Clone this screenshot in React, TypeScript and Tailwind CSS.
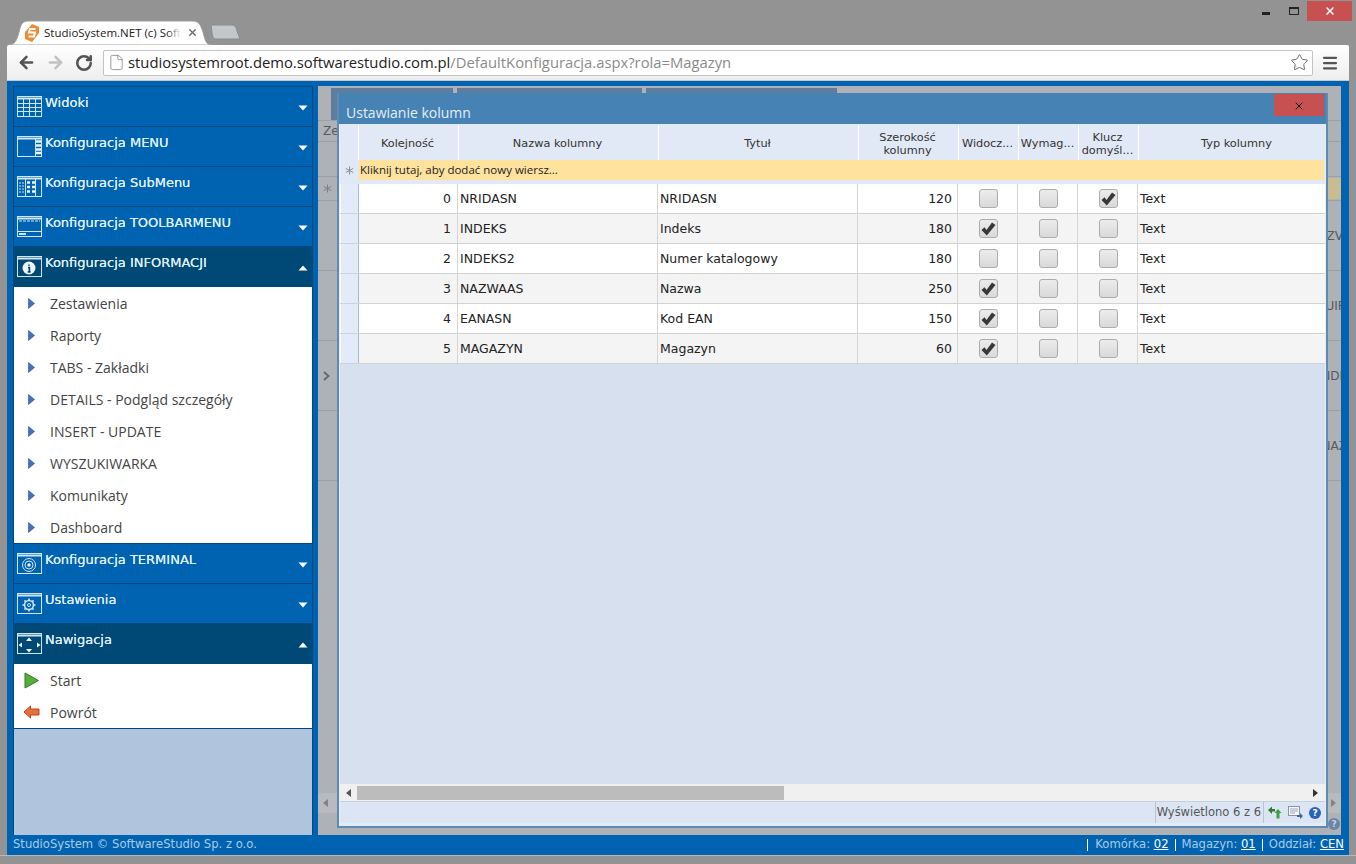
import { ArrowLeft, ArrowRight, File, Menu, RotateCw, Star, X } from 'lucide-react'

const columns = [
  { title: 'Kolejność', width: 'w-[100px]' },
  { title: 'Nazwa kolumny', width: 'w-[200px]' },
  { title: 'Tytuł', width: 'w-[200px]' },
  { title: 'Szerokość kolumny', width: 'w-[100px]' },
  { title: 'Widocz...', width: 'w-[60px]' },
  { title: 'Wymag...', width: 'w-[60px]' },
  { title: 'Klucz domyśl...', width: 'w-[60px]' },
  { title: 'Typ kolumny', width: 'w-[198px]' },
]

const rows = [
  { order: 0, name: 'NRIDASN', title: 'NRIDASN', width: 120, visible: false, required: false, key: true },
  { order: 1, name: 'INDEKS', title: 'Indeks', width: 180, visible: true, required: false, key: false },
  { order: 2, name: 'INDEKS2', title: 'Numer katalogowy', width: 180, visible: false, required: false, key: false },
  { order: 3, name: 'NAZWAAS', title: 'Nazwa', width: 250, visible: true, required: false, key: false },
  { order: 4, name: 'EANASN', title: 'Kod EAN', width: 150, visible: true, required: false, key: false },
  { order: 5, name: 'MAGAZYN', title: 'Magazyn', width: 60, visible: true, required: false, key: false },
]

const backgroundRows = [
  { label: 'NAZV', offset: 'mr-[-2px]' },
  { label: 'NUIP', offset: 'mr-[-4px]' },
  { label: 'INDE', offset: 'mr-[-6px]' },
  { label: 'NAZ', offset: 'mr-[-6px]' },
]

function WindowIcon({ kind }: { kind: string }) {
  return (
    <svg width="25" height="21" viewBox="0 0 25 21" className="shrink-0" fill="none" stroke="#cfe6f7" strokeWidth="1">
      <rect x="0.5" y="0.5" width="24" height="20" />
      <path d="M0.5 2.5H24.5" strokeWidth="2" />
      {kind === 'grid' && (
        <path d="M0.5 7.5H24.5M0.5 11.5H24.5M0.5 15.5H24.5M6.5 3V20M12.5 3V20M18.5 3V20" />
      )}
      {kind === 'menu' && (
        <g>
          <path d="M18.5 3V20" />
          <path d="M19 5.5H24M19 9.5H24M19 13.5H24M19 17H24" strokeWidth="2.4" stroke="#eaf4fb" />
        </g>
      )}
      {kind === 'submenu' && (
        <g>
          <path d="M8.5 3V20M18.5 3V20" />
          <path d="M2 7H7M2 10H7M2 13H7M2 16H7" strokeDasharray="2 1" />
          <path d="M10 6.5H13M15 6.5H18M10 11H13M15 11H18M10 15.5H13M15 15.5H18" strokeWidth="2.6" stroke="#eaf4fb" />
        </g>
      )}
      {kind === 'toolbar' && (
        <g>
          <path d="M0.5 15.5H24.5" />
          <path d="M2 18H9" strokeWidth="2" />
          <path d="M2 5H23" strokeDasharray="3 1" />
        </g>
      )}
      {kind === 'info' && (
        <g>
          <circle cx="12" cy="12" r="6.5" fill="#eef6fc" stroke="none" />
          <path d="M12 8.5V9.8M11 11.5H12.4V15.5M10.8 15.8H13.6" stroke="#00467a" strokeWidth="1.7" />
        </g>
      )}
      {kind === 'terminal' && (
        <g>
          <circle cx="12" cy="12" r="6.5" />
          <circle cx="12" cy="12" r="4" />
          <circle cx="12" cy="12" r="1.7" fill="#eef6fc" stroke="none" />
        </g>
      )}
      {kind === 'settings' && (
        <g>
          <circle cx="12" cy="12" r="4.5" strokeWidth="1.6" />
          <circle cx="12" cy="12" r="1.5" />
          <path d="M12 5.5V7.5M12 16.5V18.5M5.5 12H7.5M16.5 12H18.5M7.4 7.4L8.8 8.8M15.2 15.2L16.6 16.6M16.6 7.4L15.2 8.8M8.8 15.2L7.4 16.6" strokeWidth="1.6" />
        </g>
      )}
      {kind === 'nav' && (
        <g fill="#eef6fc" stroke="none">
          <path d="M12 4.5L15 8H9Z" />
          <path d="M12 19.5L15 16H9Z" />
          <path d="M1.5 12L5 9.5V14.5Z" />
          <path d="M23.5 12L20 9.5V14.5Z" />
        </g>
      )}
    </svg>
  )
}

function Caret({ up }: { up: boolean }) {
  return (
    <svg width="10" height="6" viewBox="0 0 10 6" className="shrink-0">
      <path d={up ? 'M5 0.5L9.5 5.5H0.5Z' : 'M0.5 0.5H9.5L5 5.5Z'} fill="#ffffff" />
    </svg>
  )
}

function MenuHeader({ label, icon, open }: { label: string; icon: string; open?: boolean }) {
  return (
    <div
      className={`h-10 shrink-0 flex items-center pl-[3px] pr-1 border-b border-[#00487d] ${
        open ? 'bg-[#004875]' : 'bg-[#0063b1]'
      }`}
    >
      <WindowIcon kind={icon} />
      <span className="ml-[3px] mb-2 flex-1 font-['DejaVu_Sans',sans-serif] text-[13px] text-[#dceefa] [text-shadow:0_0_0.5px_#ffffff]">
        {label}
      </span>
      <div className="mt-[3px] flex">
        <Caret up={!!open} />
      </div>
    </div>
  )
}

function SubItem({ label, icon }: { label: string; icon?: string }) {
  return (
    <div className="h-8 flex items-center">
      <div className="w-[27px] flex justify-end shrink-0">
        {icon === 'start' ? (
          <svg width="15" height="17" viewBox="0 0 15 17" className="mr-[2px]">
            <path d="M1 1L14.5 8.5L1 16Z" fill="#58ae3a" stroke="#2f7a22" strokeLinejoin="round" />
          </svg>
        ) : icon === 'back' ? (
          <svg width="17" height="14" viewBox="0 0 17 14" className="mr-[1px]">
            <path d="M1 7L7.5 1V4H16V10H7.5V13Z" fill="#e8703a" stroke="#b8471e" strokeLinejoin="round" />
          </svg>
        ) : (
          <svg width="7" height="11" viewBox="0 0 7 11" className="mr-[6px]">
            <path d="M0.5 0.5L6.5 5.5L0.5 10.5Z" fill="#3f72c4" stroke="#2a4f96" strokeWidth="0.6" />
          </svg>
        )}
      </div>
      <span className="ml-[9px] font-['Open_Sans',sans-serif] text-[14px] text-[#444444]">{label}</span>
    </div>
  )
}

function Sidebar() {
  return (
    <aside className="w-[300px] shrink-0 flex flex-col bg-[#b0c4de] border border-[#00487d] border-b-0">
      <MenuHeader label="Widoki" icon="grid" />
      <MenuHeader label="Konfiguracja MENU" icon="menu" />
      <MenuHeader label="Konfiguracja SubMenu" icon="submenu" />
      <MenuHeader label="Konfiguracja TOOLBARMENU" icon="toolbar" />
      <MenuHeader label="Konfiguracja INFORMACJI" icon="info" open />
      <div className="bg-white border-b border-[#00487d]">
        <SubItem label="Zestawienia" />
        <SubItem label="Raporty" />
        <SubItem label="TABS - Zakładki" />
        <SubItem label="DETAILS - Podgląd szczegóły" />
        <SubItem label="INSERT - UPDATE" />
        <SubItem label="WYSZUKIWARKA" />
        <SubItem label="Komunikaty" />
        <SubItem label="Dashboard" />
      </div>
      <MenuHeader label="Konfiguracja TERMINAL" icon="terminal" />
      <MenuHeader label="Ustawienia" icon="settings" />
      <MenuHeader label="Nawigacja" icon="nav" open />
      <div className="bg-white border-b border-[#00487d]">
        <SubItem label="Start" icon="start" />
        <SubItem label="Powrót" icon="back" />
      </div>
    </aside>
  )
}

function Checkbox({ checked }: { checked: boolean }) {
  return (
    <div className="ml-[1px] w-[19px] h-[19px] rounded-[3px] border border-[#acacac] bg-gradient-to-b from-[#ececec] to-[#d9d9d9] flex items-center justify-center">
      {checked && (
        <svg width="15" height="14" viewBox="0 0 15 14">
          <path d="M0.5 8L3.5 5.2L5.5 8L11 0.5L14.5 3L5.8 13.5Z" fill="#383838" />
        </svg>
      )}
    </div>
  )
}

function Asterisk({ color }: { color: string }) {
  return (
    <svg width="9" height="9" viewBox="0 0 9 9" fill="none" stroke={color}>
      <path d="M4.5 0.5V8.5M0.8 2.5L8.2 6.5M8.2 2.5L0.8 6.5" />
    </svg>
  )
}

function GridRow({ row, index }: { row: (typeof rows)[number]; index: number }) {
  const cell = 'h-full flex items-center border-r border-[#d6d6d6] shrink-0'
  const text = 'pt-[2px]'
  return (
    <div
      className={`h-[30px] flex items-stretch border-b border-[#d2d2d2] font-['DejaVu_Sans',sans-serif] text-[12.5px] text-[#222222] ${
        index % 2 ? 'bg-[#f4f4f4]' : 'bg-white'
      }`}
    >
      <div className="w-[19px] shrink-0 bg-[#e2ebf7] border-r border-[#a9b9cd] border-l border-l-white" />
      <div className={`${cell} ${text} w-[99px] justify-end pr-[6px]`}>{row.order}</div>
      <div className={`${cell} ${text} w-[200px] pl-[2px]`}>{row.name}</div>
      <div className={`${cell} ${text} w-[200px] pl-[2px]`}>{row.title}</div>
      <div className={`${cell} ${text} w-[100px] justify-end pr-[5px]`}>{row.width}</div>
      <div className={`${cell} w-[60px] justify-center`}>
        <Checkbox checked={row.visible} />
      </div>
      <div className={`${cell} w-[60px] justify-center`}>
        <Checkbox checked={row.required} />
      </div>
      <div className={`${cell} w-[60px] justify-center`}>
        <Checkbox checked={row.key} />
      </div>
      <div className={`${text} flex-1 flex items-center pl-[2px]`}>Text</div>
    </div>
  )
}

function ColumnsDialog() {
  return (
    <div className="absolute left-[19px] top-[7px] w-[991px] h-[735px] bg-[#4682b4] flex flex-col border-2 border-t-0 border-[#5f8ab3]">
      <div className="h-[31px] shrink-0 flex items-start justify-between">
        <span className="ml-[7px] mt-[10px] font-['Open_Sans',sans-serif] text-[14px] leading-[20px] text-[#e4eef6]">
          Ustawianie kolumn
        </span>
        <div className="w-[50px] h-[22px] mt-[1px] mr-[2px] bg-[#c75050] flex items-center justify-center">
          <X size={12} strokeWidth={2} className="mt-[2px] text-[#111111]" />
        </div>
      </div>
      <div className="flex-1 flex flex-col min-h-0 bg-[#d6e0ef] border-t border-[#dfe8f4] border-x border-x-[#e6eef8] border-b-[3px] border-b-[#e2ebf7]">
        <div className="h-[35px] shrink-0 flex overflow-hidden bg-[#e2e9f6] font-['DejaVu_Sans',sans-serif] text-[11.3px] leading-[13px] text-[#333333]">
          <div className="w-[19px] shrink-0 border-r border-white" />
          {columns.map((col) => (
            <div
              key={col.title}
              className={`${col.width} shrink-0 flex items-center justify-center text-center pt-[2px] pr-[2px] border-r border-white`}
            >
              {col.title}
            </div>
          ))}
        </div>
        <div className="h-5 shrink-0 flex items-center bg-[#e2e9f6]">
          <div className="w-[19px] shrink-0 flex justify-center">
            <Asterisk color="#8a8f96" />
          </div>
          <div className="flex-1 h-full flex items-center pl-[1px] bg-[#ffe29e] text-[#222222] font-['Open_Sans',sans-serif] text-[11.5px] mr-[1px]">
            Kliknij tutaj, aby dodać nowy wiersz...
          </div>
        </div>
        <div className="h-1 shrink-0 bg-[#e2e9f6]" />
        {rows.map((row, index) => (
          <GridRow key={row.order} row={row} index={index} />
        ))}
        <div className="flex-1" />
        <div className="h-[17px] shrink-0 flex items-center bg-[#f0f0f0]">
          <div className="w-[17px] flex justify-center shrink-0">
            <svg width="5" height="8" viewBox="0 0 5 8">
              <path d="M5 0V8L0 4Z" fill="#555555" />
            </svg>
          </div>
          <div className="w-[427px] h-[14px] bg-[#bcbcbc]" />
          <div className="flex-1 flex justify-end pr-[7px]">
            <svg width="5" height="8" viewBox="0 0 5 8">
              <path d="M0 0V8L5 4Z" fill="#333333" />
            </svg>
          </div>
        </div>
        <div className="h-[22px] shrink-0 flex items-center justify-end border-t border-[#c6d0dc] bg-[#dbe5f3] pr-[4px]">
          <div className="h-full flex items-center border-l border-[#b9c4d2] px-[1px] font-['DejaVu_Sans',sans-serif] text-[11.5px] text-[#555555]">
            Wyświetlono 6 z 6
          </div>
          <div className="h-full flex items-center gap-[6px] border-l border-[#b9c4d2] pl-[4px] ml-[1px]">
            <svg width="14" height="13" viewBox="0 0 14 13">
              <path d="M0 4L4 0.5V3H7V5.5H4V8Z" fill="#2e7d2e" />
              <path d="M10 3L13.5 7H11.5V12.5H8.5V7H6.5Z" fill="#3aa23a" />
            </svg>
            <svg width="15" height="13" viewBox="0 0 15 13">
              <rect x="0.5" y="0.5" width="11" height="9" fill="#f4f7fb" stroke="#8794a6" />
              <path d="M2 3H10M2 5H10M2 7H7" stroke="#9aa6b6" />
              <path d="M9 9H12V7L15 10L12 13V11H9Z" fill="#3c68a8" />
            </svg>
            <div className="w-3 h-3 rounded-full bg-[#2a62b8] text-white text-[9px] leading-3 text-center font-bold font-['DejaVu_Sans',sans-serif]">
              ?
            </div>
          </div>
        </div>
      </div>
    </div>
  )
}

function BackgroundGrid() {
  return (
    <div className="relative flex-1 min-w-0 flex flex-col bg-[#aeb1b6] font-['DejaVu_Sans',sans-serif] text-[12px] text-[#555a60] overflow-hidden">
      <div className="h-[34px] shrink-0 pl-[13px] pt-[2px] flex gap-1">
        <div className="w-[122px] bg-[#5f7d9e]" />
        <div className="w-[185px] bg-[#5f7d9e]" />
        <div className="w-[191px] bg-[#5f7d9e]" />
      </div>
      <div className="h-[22px] shrink-0 flex items-center border-y border-[#9c9fa4] pl-[5px]">Ze</div>
      <div className="h-[35px] shrink-0 border-b border-[#9c9fa4]" />
      <div className="h-[24px] shrink-0 flex items-center justify-between pl-[5px] border-b border-[#9c9fa4]">
        <Asterisk color="#7c8086" />
        <div className="w-[30px] h-[21px] bg-[#c9bc92]" />
      </div>
      {backgroundRows.map((row) => (
        <div key={row.label} className="h-[70px] shrink-0 flex items-center justify-between border-b border-[#9c9fa4]">
          {row.label === 'INDE' ? (
            <svg width="7" height="10" viewBox="0 0 7 10" fill="none" stroke="#666a70" strokeWidth="2" className="ml-[5px]">
              <path d="M1 1L5.5 5L1 9" />
            </svg>
          ) : (
            <span />
          )}
          <span className={`${row.offset} whitespace-nowrap`}>{row.label}</span>
        </div>
      ))}
      <div className="flex-1" />
      <div className="h-[20px] shrink-0 flex items-center justify-between bg-[#b8babd] px-[5px]">
        <svg width="5" height="8" viewBox="0 0 5 8">
          <path d="M5 0V8L0 4Z" fill="#80848a" />
        </svg>
        <svg width="5" height="8" viewBox="0 0 5 8">
          <path d="M0 0V8L5 4Z" fill="#80848a" />
        </svg>
      </div>
      <div className="h-[22px] shrink-0 flex items-center justify-end pr-[1px]">
        <div className="w-3 h-3 rounded-full bg-[#6b84a8] text-[#c8d2df] text-[9px] leading-3 text-center font-bold">?</div>
      </div>
      <ColumnsDialog />
    </div>
  )
}

function BrowserChrome() {
  return (
    <>
      <div className="h-[45px] shrink-0 flex items-end relative pl-[8px]">
        <div className="relative w-[204px] h-[25px] flex items-center">
          <svg width="204" height="25" viewBox="0 0 204 25" className="absolute inset-0">
            <path d="M0 25C7 25 9 20 11 12C13 3 15 1 21 1H184C190 1 192 3 195 12C197 20 198 25 204 25Z" fill="#ffffff" stroke="#9f9f9f" />
          </svg>
          <svg width="14" height="18" viewBox="0 0 14 18" className="relative ml-[17px] shrink-0">
            <path d="M7 0L14 3V9L7 18L0 15V8Z" fill="#ee8a32" />
            <path d="M10.5 5H5L4 8.5H10L9 12.5H3.5" fill="none" stroke="#ffffff" strokeWidth="2" />
          </svg>
          <span className="relative ml-[5px] w-[137px] overflow-hidden whitespace-nowrap font-['Open_Sans',sans-serif] text-[11.5px] text-[#222222]">
            StudioSystem.NET (c) Soft
            <span className="absolute right-0 top-0 h-full w-[14px] bg-gradient-to-r from-transparent to-white" />
          </span>
          <X size={11} strokeWidth={3} className="relative ml-[6px] text-[#6b6b6b]" />
        </div>
        <svg width="32" height="16" viewBox="0 0 32 16" className="mb-[5px] -ml-[2px]">
          <path d="M1 1H22C25 1 26 3 27 7L30 15H6C3 15 3 13 2 9Z" fill="#c3c7cc" stroke="#8a8a8a" />
        </svg>
        <div className="absolute right-[4px] top-[1px] flex items-center">
          <div className="w-[8px] h-[3px] bg-[#222222] mr-[19px] mt-[4px]" />
          <div className="w-[10px] h-[8px] border border-t-2 border-[#222222] mr-[8px]" />
          <div className="w-[45px] h-5 bg-[#c75050] flex items-center justify-center">
            <X size={12} strokeWidth={3} className="text-white" />
          </div>
        </div>
      </div>
      <div className="h-[36px] shrink-0 mx-[7px] bg-gradient-to-b from-white to-[#eeeeee] flex items-center rounded-t-[2px] border-b border-[#c8c8c8]">
        <ArrowLeft size={19} strokeWidth={3.2} className="ml-[10px] text-[#555555]" />
        <ArrowRight size={19} strokeWidth={3.2} className="ml-[10px] text-[#c2c2c2]" />
        <RotateCw size={18} strokeWidth={3.4} className="ml-[10px] text-[#555555]" />
        <div className="ml-[10px] w-[1210px] h-[26px] bg-white border border-[#c4c4c4] rounded-[2px] flex items-center">
          <File size={17} strokeWidth={1.2} className="ml-[4px] text-[#8a8a8a]" />
          <span className="ml-[3px] flex-1 font-['Open_Sans',sans-serif] text-[14.8px] text-[#222222]">
            studiosystemroot.demo.softwarestudio.com.pl
            <span className="text-[#8b8b8b]">/DefaultKonfiguracja.aspx?rola=Magazyn</span>
          </span>
          <Star size={19} strokeWidth={1.2} className="mr-[3px] text-[#666666]" />
        </div>
        <Menu size={18} strokeWidth={3} className="ml-[8px] text-[#555555]" />
      </div>
    </>
  )
}

export default function App() {
  return (
    <div className="w-[1356px] h-[864px] flex flex-col overflow-hidden bg-[#939393]">
      <BrowserChrome />
      <div className="flex-1 min-h-0 mx-[7px] flex flex-col bg-[#0063b1] border-t-[5px] border-[#0063b1]">
        <div className="flex-1 min-h-0 flex pl-[6px] pr-[8px] gap-[5px]">
          <Sidebar />
          <BackgroundGrid />
        </div>
        <div className="h-[20px] shrink-0 flex items-center justify-between pl-[6px] pr-[5px] font-['DejaVu_Sans',sans-serif] text-[11.6px] text-[#a8cbe8]">
          <span>StudioSystem © SoftwareStudio Sp. z o.o.</span>
          <span className="flex items-center whitespace-pre">
            <span className="w-[1px] h-3 bg-white mr-[7px]" />
            Komórka: <span className="underline text-white">02</span>
            <span className="w-[1px] h-3 bg-white mx-[6px]" />
            Magazyn: <span className="underline text-white">01</span>
            <span className="w-[1px] h-3 bg-white mx-[6px]" />
            Oddział: <span className="underline text-white">CEN</span>
          </span>
        </div>
      </div>
      <div className="h-[9px] shrink-0 border-t border-[#b9b9b9]" />
    </div>
  )
}
